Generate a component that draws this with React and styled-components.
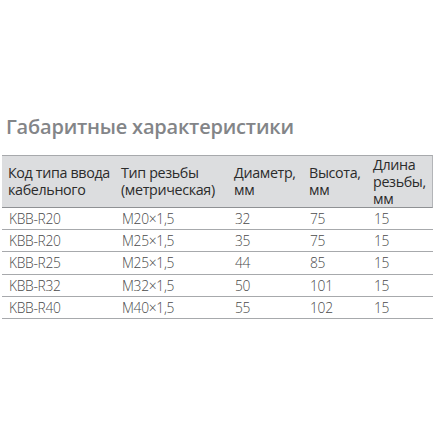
import React from "react";
import styled, { createGlobalStyle } from "styled-components";

const GlobalStyle = createGlobalStyle`
  html, body {
    margin: 0;
    padding: 0;
    background: #ffffff;
  }
  body {
    font-family: "Open Sans", "Noto Sans", sans-serif;
  }
`;

const Page = styled.div`
  width: 440px;
  height: 440px;
  box-sizing: border-box;
  padding: 114px 7px 0 2px;
`;

const Title = styled.h2`
  margin: 0 0 15px 4px;
  font-size: 20px;
  font-weight: 600;
  line-height: 26px;
  color: #838588;
  letter-spacing: -0.2px;
`;

const Table = styled.div`
  display: grid;
  grid-template-columns: 113px 113px 75px 64px 1fr;
`;

const HeadCell = styled.div`
  background: #dcdddf;
  border-top: 1px solid #a7a9ac;
  border-bottom: 1px solid #8f9194;
  border-right: ${(p) => (p.last ? "1px solid #b3b5b8" : "none")};
  padding: ${(p) => (p.tall ? "0 0 0 6px" : "8px 0 9px 6px")};
  font-size: 14.3px;
  line-height: 17px;
  color: #2b2b2b;
  letter-spacing: -0.35px;
  white-space: pre-line;
`;

const Cell = styled.div`
  border-bottom: 1px solid #a7a9ac;
  padding: 2px 0 0 7px;
  height: 22.2px;
  box-sizing: border-box;
  font-size: 13.8px;
  font-weight: 300;
  line-height: 17px;
  color: #4a4a4a;
  letter-spacing: -0.3px;
`;

const headers = [
  "Код типа ввода\nкабельного",
  "Тип резьбы\n(метрическая)",
  "Диаметр,\nмм",
  "Высота,\nмм",
  "Длина\nрезьбы,\nмм",
];

const rows = [
  ["KBB-R20", "M20×1,5", "32", "75", "15"],
  ["KBB-R20", "M25×1,5", "35", "75", "15"],
  ["KBB-R25", "M25×1,5", "44", "85", "15"],
  ["KBB-R32", "M32×1,5", "50", "101", "15"],
  ["KBB-R40", "M40×1,5", "55", "102", "15"],
];

export default function App() {
  return (
    <Page>
      <GlobalStyle />
      <Title>Габаритные характеристики</Title>
      <Table>
        {headers.map((h, i) => (
          <HeadCell key={i} tall={i === 4} last={i === 4}>
            {h}
          </HeadCell>
        ))}
        {rows.map((r, ri) =>
          r.map((c, ci) => <Cell key={ri + "-" + ci}>{c}</Cell>)
        )}
      </Table>
    </Page>
  );
}
